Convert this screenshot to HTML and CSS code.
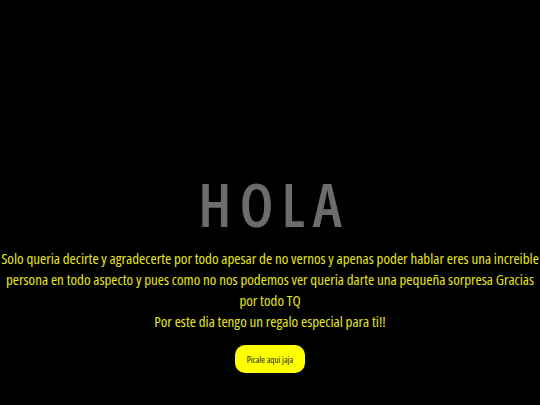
FILE: index.html
```html
<!DOCTYPE html>
<html>
<head>
<meta charset="utf-8">
<link rel="stylesheet" href="styles.css">
</head>
<body>
<main class="page">
  <h1 class="title">HOLA</h1>
  <p class="message first">Solo queria decirte y agradecerte por todo apesar de no vernos y apenas poder hablar eres una increible persona en todo aspecto y pues como no nos podemos ver queria darte una pequeña sorpresa Gracias por todo TQ</p>
  <p class="message">Por este dia tengo un regalo especial para ti!!</p>
  <button class="btn">Picale aqui jaja</button>
</main>
</body>
</html>
```
FILE: styles.css
```css
html, body {
  margin: 0;
  padding: 0;
  background: #000;
  height: 100%;
}
.page {
  width: 540px;
  height: 405px;
  display: flex;
  flex-direction: column;
  align-items: center;
  padding-top: 174px;
  box-sizing: border-box;
  overflow: hidden;
}
.title {
  margin: 0;
  font-family: "Open Sans", sans-serif;
  font-stretch: 75%;
  font-weight: 600;
  font-size: 60px;
  line-height: 60px;
  letter-spacing: 8px;
  margin-right: -8px;
  color: #6d6b6b;
}
.message {
  margin: 0;
  width: 540px;
  font-family: "Open Sans", sans-serif;
  font-stretch: 75%;
  font-weight: 500;
  font-size: 15px;
  line-height: 21px;
  color: #e8e619;
  text-align: center;
}
.first {
  margin-top: 14px;
}
.btn {
  margin-top: 13px;
  background: #ffff00;
  border: none;
  border-radius: 10px;
  width: 70px;
  height: 28px;
  padding: 0;
  font-family: "Open Sans", sans-serif;
  font-stretch: 75%;
  font-weight: 500;
  font-size: 9px;
  color: #222;
}
```
